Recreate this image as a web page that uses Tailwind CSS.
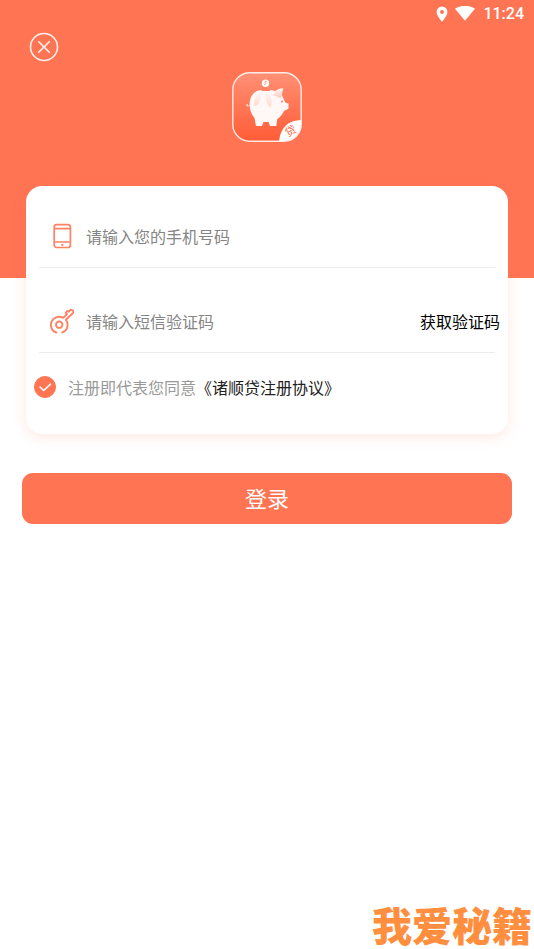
<!DOCTYPE html>
<html lang="zh-CN">
<head>
<meta charset="utf-8">
<meta name="viewport" content="width=device-width, initial-scale=1">
<title>登录</title>
<script src="https://cdn.jsdelivr.net/npm/@tailwindcss/browser@4"></script>
</head>
<body class="min-h-screen flex flex-col bg-white font-['Noto_Sans_CJK_SC',sans-serif]">
<header class="bg-[#ff7453] pb-[136px]">
  <div class="flex h-7 items-center justify-end pr-[10px] text-white">
    <svg class="mr-[7px] h-4 w-3" viewBox="0 0 12 16" fill="currentColor" aria-hidden="true"><path fill-rule="evenodd" d="M6 0.5A5.4 5.4 0 0 0 .6 5.9C.6 9.8 6 15.700 6 15.700s5.4-5.9 5.4-9.8A5.4 5.4 0 0 0 6 .5ZM6 4a2 2 0 1 1 0 4 2 2 0 0 1 0-4Z"/></svg>
    <svg class="mr-2 h-4 w-5" viewBox="0 0 20 16" fill="currentColor" aria-hidden="true"><path d="M10 14.800 0 2.800C2.800.9 6.200-.2 10-.2s7.200 1.100 10 3Z"/></svg>
    <time class="font-[Roboto,sans-serif] text-base font-medium leading-none">11:24</time>
  </div>
  <div class="flex h-[114px] items-start justify-between px-[29px] pt-1">
    <button type="button" aria-label="关闭" class="size-[30px] text-white/90">
      <svg class="size-[30px]" viewBox="0 0 30 30" fill="none" stroke="currentColor" stroke-width="1.600" stroke-linecap="round"><circle cx="15" cy="15" r="13.500"/><path d="m9.700 9.700 10.600 10.600m0-10.600L9.700 20.300"/></svg>
    </button>
    <svg class="mt-10 size-[70px]" viewBox="0 0 70 70" role="img" aria-label="诸顺贷">
      <defs>
        <linearGradient id="tile" x1="0" y1="0" x2="0" y2="1"><stop offset="0" stop-color="#ff9075"/><stop offset="1" stop-color="#ff5c36"/></linearGradient>
        <linearGradient id="ear" x1="0" y1="0" x2="0" y2="1"><stop offset="0" stop-color="#fff4f0"/><stop offset="1" stop-color="#ffc4b4"/></linearGradient>
        <linearGradient id="spot" x1="0" y1="0" x2="0" y2="1"><stop offset="0" stop-color="#fff4f0"/><stop offset="1" stop-color="#ffd9ce"/></linearGradient>
        <clipPath id="frame"><rect x="1" y="1" width="68" height="68" rx="17"/></clipPath>
      </defs>
      <rect x="1" y="1" width="68" height="68" rx="17" fill="url(#tile)"/>
      <g clip-path="url(#frame)">
        <path d="M47 70C48 56 56 48 70 48v22Z" fill="#fff"/>
        <text x="58.500" y="63" text-anchor="middle" transform="rotate(-32 58.500 59)" font-size="11" font-weight="400" fill="#ff6542">贷</text>
      </g>
      <rect x=".8" y=".8" width="68.400" height="68.400" rx="17" fill="none" stroke="#fff" stroke-opacity=".85" stroke-width="1.400"/>
      <circle cx="33.500" cy="11.200" r="3.700" fill="#fff"/>
      <path d="M34.700 9.500c-1.300-.8-2.300 0-1.700 1s1.800 1.600-.8 2.400" fill="none" stroke="#ff8c70" stroke-width=".9"/>
      <path d="M18 33.500c-2 1-4 .5-3.500-.8s2 .3.500 1.300" fill="none" stroke="#ffe0d7" stroke-width=".9"/>
      <path d="M17.600 32.500C17.600 24.500 22 18 30 18h8c2 .1 3.500.5 5 1.200 2-1.800 5-2.800 8.200-3.200-.8 2.500-1.400 5-1 8.300 1.300 1.900 2 4.200 3.300 6.400l3 .8v5.300l-4.300 1.900c-1.600 3.600-4 6.400-7 8.500L44.300 54H38l-1.500-4h-5L30 54h-6L22.500 46c-3-3.500-4.900-8-4.900-13.500Z" fill="#fff8f6"/>
      <path d="M28 21c-4.800 3.500-6.500 8-5.500 13 4.700-.8 7.300-6.200 5.500-13Z" fill="url(#spot)"/>
      <path d="M35 21c-2.200 5.500-1 11.500 3.300 14.500 2.600-5 1.500-11.300-3.300-14.500Z" fill="url(#spot)"/>
      <path d="M41 23.500c2-3.500 5.800-6 10.200-6.900-1.200 4-1.500 7.200-2.500 10.200-2-2-4.500-3.200-7.700-3.300Z" fill="url(#ear)"/>
      <path d="M29.500 18.300h8.500" stroke="#ff7c5d" stroke-width="1.300"/>
      <circle cx="50" cy="29.500" r=".9" fill="#ff7453"/>
    </svg>
    <span class="w-[30px]"></span>
  </div>
</header>
<main class="relative -mt-[92px]">
  <form>
    <section class="mx-[26px] rounded-[16px] bg-white pb-[14px] shadow-[0_3px_14px_rgba(255,116,83,0.16)]">
      <div class="flex h-[81px] items-center pt-[19px] pl-6">
        <label for="phone" class="shrink-0">
          <svg class="h-[26px] w-6 text-[#ff8265]" viewBox="0 0 24 26" fill="none" stroke="currentColor" stroke-width="1.700" role="img" aria-label="手机号码"><rect x="4.200" y="1.700" width="16.200" height="22.800" rx="2.500"/><path d="M4 5.700h16.400M4 19h16.400"/><path d="M11.300 21.800h2" stroke-width="2"/></svg>
        </label>
        <input id="phone" type="tel" placeholder="请输入您的手机号码" class="ml-3 h-10 min-w-0 flex-1 text-base text-gray-800 outline-none placeholder:text-[#858585]">
      </div>
      <hr class="mx-[13px] border-[#ececec]">
      <div class="flex h-[84px] items-center pt-[22px] pr-2 pl-6">
        <label for="code" class="shrink-0">
          <svg class="h-[26px] w-6 text-[#ff8265]" viewBox="0 0 24 26" fill="none" stroke="currentColor" stroke-width="1.900" stroke-linecap="round" stroke-linejoin="round" role="img" aria-label="短信验证码"><circle cx="9.200" cy="16.700" r="3.200"/><path d="M6.300 24.500C3 23.200.9 20.300.9 16.800c0-4.600 3.700-8 8.200-8 1.500 0 2.900.4 4.100 1.100L17 6.100l-1.300-1.300L17.400 3l1.500.7 1.500-2 2.700.9.2 2.100-7.400 7.100c1.200 1.400 1.700 3.100 1.700 5 0 3.600-2.100 6.500-5.400 7.700"/></svg>
        </label>
        <input id="code" type="text" inputmode="numeric" placeholder="请输入短信验证码" class="ml-3 h-10 min-w-0 flex-1 text-base text-gray-800 outline-none placeholder:text-[#858585]">
        <button type="button" class="h-10 shrink-0 text-base text-black">获取验证码</button>
      </div>
      <hr class="mx-[13px] border-[#ececec]">
      <div class="flex h-[67px] items-center pl-2 text-base">
        <span class="grid size-[22px] shrink-0">
          <input id="agree" type="checkbox" checked class="peer col-start-1 row-start-1 size-[22px] appearance-none rounded-full border border-[#ff7453] checked:bg-[#ff7453]">
          <svg class="pointer-events-none invisible col-start-1 row-start-1 size-[22px] peer-checked:visible" viewBox="0 0 22 22" fill="none" stroke="#fff" stroke-width="1.600" stroke-linecap="round" stroke-linejoin="round" aria-hidden="true"><path d="m6 11 3.700 3.500 6.800-6.300"/></svg>
        </span>
        <label for="agree" class="ml-3 text-[#999]">注册即代表您同意</label>
        <a href="#agreement" class="text-[#222]">《诸顺贷注册协议》</a>
      </div>
    </section>
    <div class="px-[22px] pt-[39px]">
      <button type="submit" class="h-[51px] w-full rounded-[11px] bg-[#ff7453] pb-[2px] text-[22px] text-white">登录</button>
    </div>
  </form>
</main>
<footer class="mt-auto flex justify-end pr-[2px]">
  <p class="text-[40px] leading-[50px] font-black text-[#ff8f3f]">我爱秘籍</p>
</footer>
</body>
</html>
